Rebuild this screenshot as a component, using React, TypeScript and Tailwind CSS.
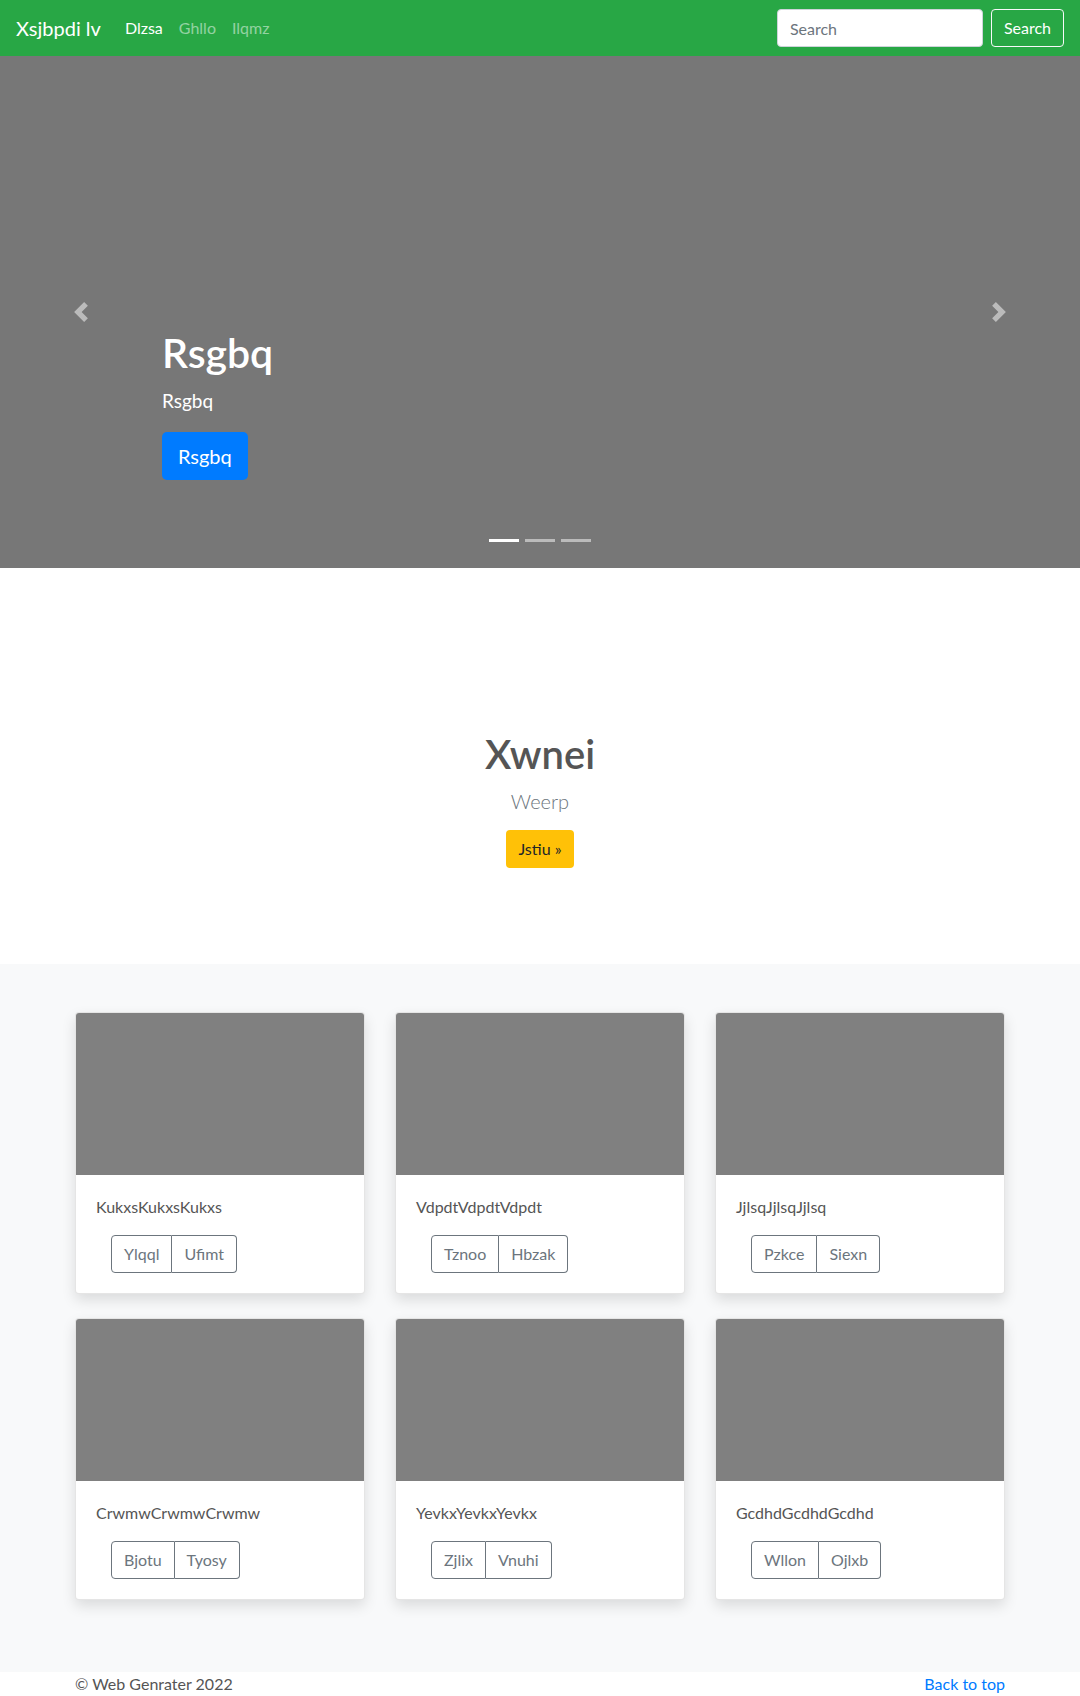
import { useState } from "react";

const font = { fontFamily: '"Segoe UI", Lato, "Noto Sans", sans-serif' };

const cards = [
  { title: "KukxsKukxsKukxs", a: "Ylqql", b: "Ufimt" },
  { title: "VdpdtVdpdtVdpdt", a: "Tznoo", b: "Hbzak" },
  { title: "JjlsqJjlsqJjlsq", a: "Pzkce", b: "Siexn" },
  { title: "CrwmwCrwmwCrwmw", a: "Bjotu", b: "Tyosy" },
  { title: "YevkxYevkxYevkx", a: "Zjlix", b: "Vnuhi" },
  { title: "GcdhdGcdhdGcdhd", a: "Wllon", b: "Ojlxb" },
];

function Chevron({ flip }: { flip?: boolean }) {
  return (
    <svg
      viewBox="0 0 8 8"
      className={flip ? "w-5 h-5 rotate-180" : "w-5 h-5"}
      fill="#fff"
    >
      <path d="M5.25 0l-4 4 4 4 1.5-1.5L4.25 4l2.5-2.5L5.25 0z" />
    </svg>
  );
}

function Navbar() {
  return (
    <nav className="h-14 bg-[#28a745] flex items-center px-4">
      <a className="text-white text-[20px] leading-[30px] mr-4">Xsjbpdi lv</a>
      <ul className="flex items-center text-[16px] leading-6">
        <li className="px-2 text-white">Dlzsa</li>
        <li className="px-2 text-white/50">Ghllo</li>
        <li className="px-2 text-white/50">Ilqmz</li>
      </ul>
      <form className="ml-auto flex items-center">
        <input
          placeholder="Search"
          className="w-[206px] h-[38px] rounded bg-white border border-[#ced4da] px-3 text-[16px] text-[#495057] placeholder:text-[#6c757d] mr-2 outline-none"
          style={font}
        />
        <button
          type="button"
          className="h-[38px] px-3 rounded border border-[#f8f9fa] text-white text-[16px]"
          style={font}
        >
          Search
        </button>
      </form>
    </nav>
  );
}

function Carousel() {
  const [active, setActive] = useState(0);
  return (
    <div className="relative h-[512px] bg-[#777]">
      <button className="absolute left-0 top-0 bottom-0 w-[15%] flex items-center justify-center opacity-50">
        <Chevron />
      </button>
      <button className="absolute right-0 top-0 bottom-0 w-[15%] flex items-center justify-center opacity-50">
        <Chevron flip />
      </button>
      <div className="absolute left-[15%] right-[15%] bottom-[88px] text-white text-left">
        <h1 className="text-[41px] leading-[48px] font-semibold mb-2.5">Rsgbq</h1>
        <p className="text-[19px] leading-[27px] mb-[18px]">Rsgbq</p>
        <a className="inline-block bg-[#007bff] text-white text-[20px] leading-[30px] px-4 py-[9px] rounded-[5px]">
          Rsgbq
        </a>
      </div>
      <ol className="absolute bottom-[26px] left-0 right-0 flex justify-center gap-[6px]">
        {[0, 1, 2].map((i) => (
          <li
            key={i}
            onClick={() => setActive(i)}
            className={
              i === active
                ? "w-[30px] h-[3px] bg-white"
                : "w-[30px] h-[3px] bg-white/50"
            }
          />
        ))}
      </ol>
    </div>
  );
}

function Jumbotron() {
  return (
    <section className="bg-white text-center pt-[162px] pb-[96px]">
      <h1 className="text-[40px] leading-[48px] font-semibold text-[#555] mb-2">
        Xwnei
      </h1>
      <p className="text-[20px] leading-[30px] font-light text-[#6c757d] mb-[14px]">
        Weerp
      </p>
      <a className="inline-block bg-[#ffc107] text-[#212529] text-[16px] leading-6 px-3 py-[7px] rounded">
        Jstiu »
      </a>
    </section>
  );
}

function Card({ title, a, b }: { title: string; a: string; b: string }) {
  return (
    <div className="bg-white border border-black/10 rounded overflow-hidden shadow-[0_6px_14px_rgba(0,0,0,0.12)]">
      <div className="h-[162px] bg-[#808080]" />
      <div className="p-5">
        <p className="text-[16px] leading-6 text-[#555] mb-4">{title}</p>
        <div className="flex ml-[15px]">
          <button className="h-[38px] px-3 text-[16px] text-[#6c757d] border border-[#6c757d] rounded-l">
            {a}
          </button>
          <button className="h-[38px] px-3 text-[16px] text-[#6c757d] border border-l-0 border-[#6c757d] rounded-r">
            {b}
          </button>
        </div>
      </div>
    </div>
  );
}

function Album() {
  return (
    <section className="bg-[#f8f9fa] pt-12 pb-[72px]">
      <div className="w-[930px] mx-auto grid grid-cols-3 gap-x-[30px] gap-y-6">
        {cards.map((c) => (
          <Card key={c.title} {...c} />
        ))}
      </div>
    </section>
  );
}

export default function App() {
  return (
    <div style={font} className="min-h-screen bg-white">
      <Navbar />
      <Carousel />
      <Jumbotron />
      <Album />
      <footer className="bg-white">
        <div className="w-[930px] mx-auto flex justify-between text-[16px] leading-6">
          <p className="text-[#555]">© Web Genrater 2022</p>
          <a className="text-[#007bff]">Back to top</a>
        </div>
      </footer>
    </div>
  );
}
